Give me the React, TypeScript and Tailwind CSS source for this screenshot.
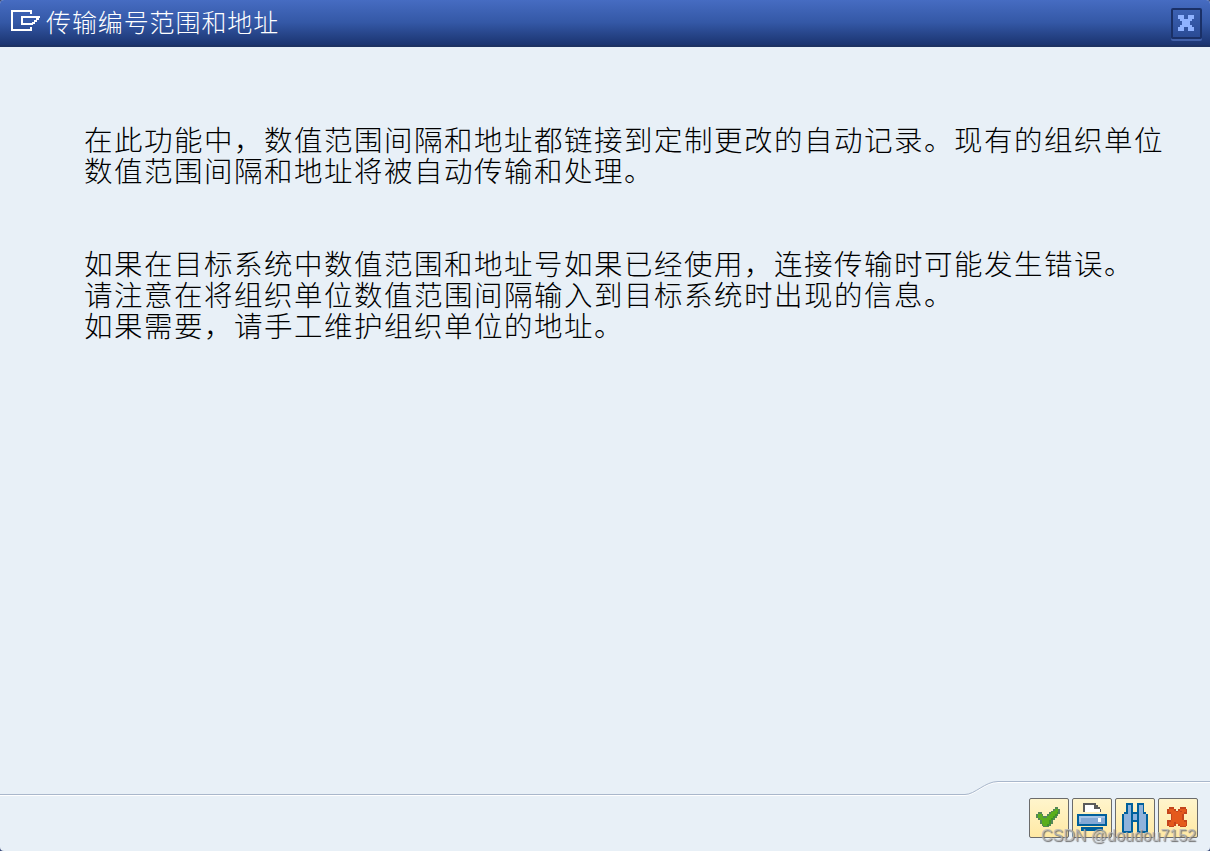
import React from "react";

type PixelIconProps = {
  rows: string[];
  colors: Record<string, string>;
  className?: string;
};

const PixelIcon: React.FC<PixelIconProps> = ({ rows, colors, className }) => (
  <svg viewBox={`0 0 ${rows[0].length} ${rows.length}`} className={className} shapeRendering="crispEdges">
    {rows.flatMap((row, y) =>
      row.split("").map((c, x) =>
        colors[c] ? <rect key={`${x}-${y}`} x={x} y={y} width="1" height="1" fill={colors[c]} /> : null
      )
    )}
  </svg>
);

const checkRows = [
  "................",
  "................",
  "...........gg...",
  "..........gllg..",
  ".........glllg..",
  "..gg....gllldg..",
  ".gllg..gllldg...",
  ".glllggllldg....",
  "..glllllldg.....",
  "...glllldg......",
  "...glllldg......",
  "....glldg.......",
  ".....ggg........",
  "................",
  "................",
  "................",
];

const printRows = [
  "...kkkkkkk......",
  "...kwwwwwkk.....",
  "...kwwwwwkkk....",
  "...kwwwwwwwwk...",
  "...kwwwwwwwwk...",
  "................",
  "bbbbbbbbbbbbbbbb",
  "bllllllllllllllb",
  "blcccccccccwwccb",
  "blcccccccccwwccb",
  "bccccccccccccccb",
  "bbbbbbbbbbbbbbbb",
  "................",
  "..bbbbbbbbbbbb..",
  "..bbbbbbbbbbbb..",
  "................",
];

const findRows = [
  "...bbbb..bbbb...",
  "...bllb..bllb...",
  "...bllb..bllb...",
  "...bllb..bllb...",
  "...bllb..bllb...",
  "..bbllbbbbllbb..",
  ".bllllbllbllllb.",
  ".bllllbllbllllb.",
  ".bllllbllbllllb.",
  ".bllllbbbbllllb.",
  ".bllllb..bllllb.",
  ".bllllb..bllllb.",
  ".bllllb..bllllb.",
  ".bllllb..bllllb.",
  ".bllllb..bllllb.",
  ".bbbbbb..bbbbbb.",
];

const cancelRows = [
  "................",
  "................",
  "...rrr...rrr....",
  "..rooor.rooor...",
  "..roooororoor...",
  "..rrooooooorr...",
  "....rooooor.....",
  "....rooooor.....",
  "....rooooor.....",
  "..rrooooooorr...",
  "..rooorooooor...",
  "..rooor.rooor...",
  "...rrr...rrr....",
  "................",
  "................",
  "................",
];

const closeRows = [
  "xxx..xxx",
  "xxx..xxx",
  ".xxxxxx.",
  "..xxxx..",
  "..xxxx..",
  ".xxxxxx.",
  "xxx..xxx",
  "xxx..xxx",
];

const actions = [
  { name: "继续", rows: checkRows, colors: { g: "#54865a", l: "#5aae1c", d: "#3f9424" } },
  { name: "打印", rows: printRows, colors: { k: "#5b5b5b", w: "#ffffff", b: "#00609c", l: "#a6c4e6", c: "#84a9d6" } },
  { name: "查找", rows: findRows, colors: { b: "#00609c", l: "#8fb3dc" } },
  { name: "取消", rows: cancelRows, colors: { r: "#c4451c", o: "#e45a1c" } },
];

const App: React.FC = () => {
  return (
    <div className="h-screen w-full bg-[#3b4a78]">
      <div className="flex h-full w-full flex-col overflow-hidden rounded-[4px] bg-[#e8f0f7] font-['Noto_Sans_CJK_SC',sans-serif] font-light">
        {/* Title bar */}
        <header className="flex h-[47px] shrink-0 items-start justify-between border-b-2 border-[#1d3263] bg-linear-to-b from-[#466cc2] via-[#3458a6] to-[#1b3470] pr-2 pl-[11px]">
          <div className="flex items-start">
            <svg width="30" height="22" viewBox="0 0 30 22" className="mt-[10px]" fill="none" stroke="#fff" strokeWidth="2" shapeRendering="crispEdges">
              <path d="M20 4V1H1V20H20V17" />
              <path d="M22 14H11V7H29" />
              <path d="M25 9H28M23 11H26M21 13H24" />
            </svg>
            <h1 className="ml-[5px] pt-[7px] text-[25px] leading-[28px] tracking-[0.9px] text-white">传输编号范围和地址</h1>
          </div>
          <button className="mt-2 flex size-[31px] items-center justify-center rounded-[2px] border-2 border-[#1a3067] bg-linear-to-b from-[#3c61b2] to-[#2a4b95] pr-px pb-px shadow-[0_2px_0_#4160a8]">
            <PixelIcon rows={closeRows} colors={{ x: "#8fb2ff" }} className="size-4" />
          </button>
        </header>

        {/* Message */}
        <main className="flex grow flex-col gap-[62px] pt-[76px] pl-[84px] text-[28.5px] leading-[31px] tracking-[1.5px] whitespace-nowrap text-black">
          <div>
            <p>在此功能中，数值范围间隔和地址都链接到定制更改的自动记录。现有的组织单位</p>
            <p>数值范围间隔和地址将被自动传输和处理。</p>
          </div>
          <div>
            <p>如果在目标系统中数值范围和地址号如果已经使用，连接传输时可能发生错误。</p>
            <p>请注意在将组织单位数值范围间隔输入到目标系统时出现的信息。</p>
            <p>如果需要，请手工维护组织单位的地址。</p>
          </div>
        </main>

        {/* Button bar */}
        <footer className="relative h-[71px] shrink-0">
          <svg width="1210" height="18" viewBox="0 0 1210 18" className="block" fill="none">
            <path d="M0 15.5H965C975 15.5 985 2.5 998 2.5H1210" stroke="#fff" />
            <path d="M0 14.5H965C975 14.5 985 1.5 998 1.5H1210" stroke="#a9b7cb" />
          </svg>
          <div className="flex justify-end gap-[3px] pr-3">
            {actions.map((action) => (
              <button
                key={action.name}
                aria-label={action.name}
                className="flex size-10 items-center justify-center rounded-[2px] border border-[#6b6b6b] bg-linear-to-b from-[#fff5cc] to-[#ffe9a4]"
              >
                <PixelIcon rows={action.rows} colors={action.colors} className="size-[30px]" />
              </button>
            ))}
          </div>
          <span className="absolute right-[14px] bottom-[5px] font-['Liberation_Sans',sans-serif] text-[16px] leading-5 font-normal whitespace-nowrap text-[#b8b8b8]/80 [text-shadow:1px_1px_1px_#6e6e6e]">
            CSDN @doudou7152
          </span>
        </footer>
      </div>
    </div>
  );
};

export default App;
